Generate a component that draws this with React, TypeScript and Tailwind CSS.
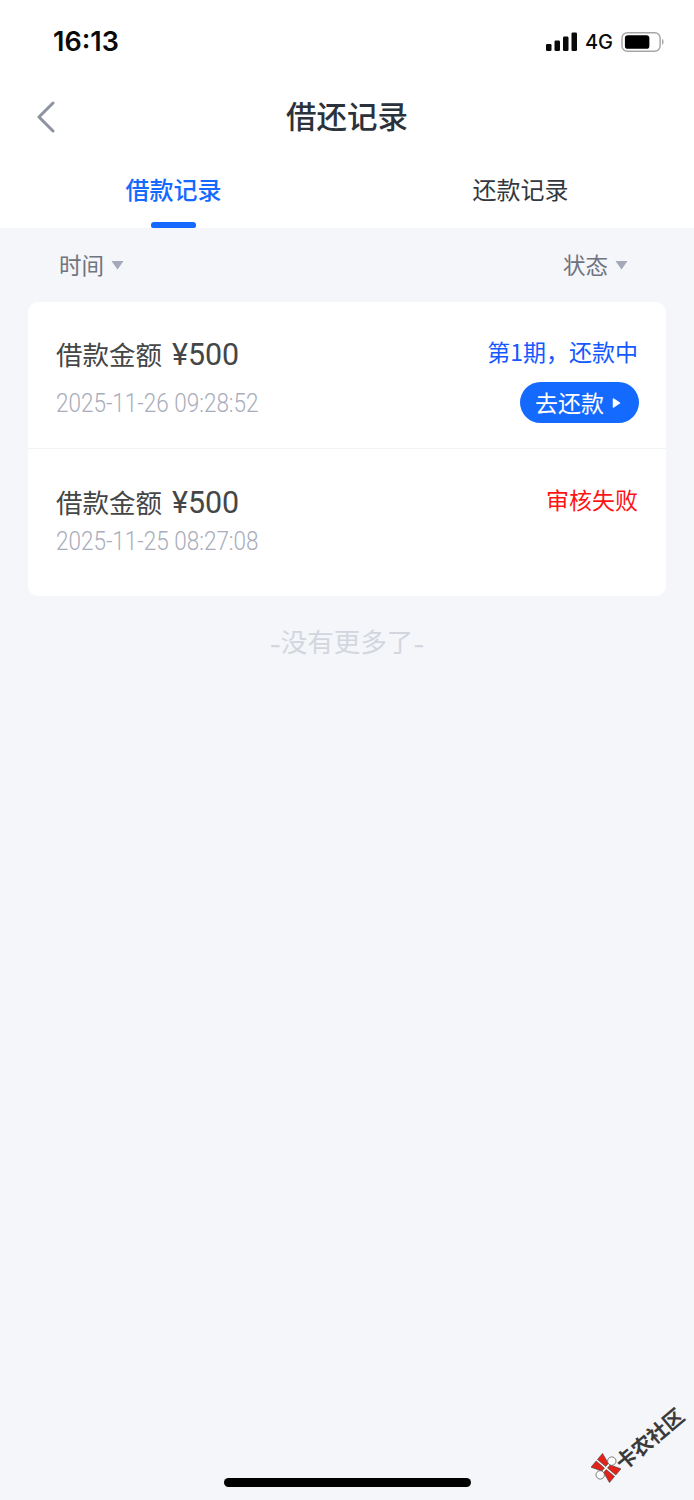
const cjk = { fontFamily: '"Noto Sans CJK SC", "Noto Sans", sans-serif' };
const latin = { fontFamily: 'Roboto, "Noto Sans CJK SC", sans-serif' };

function Caret() {
  return (
    <svg width="13" height="10" viewBox="0 0 13 10" className="ml-[7px]">
      <path d="M0.5 1 H12.5 L6.5 9.5 Z" fill="#a3a8ba" />
    </svg>
  );
}

function Row({ date, status, statusClass, children, rowClass, dateClass }: any) {
  return (
    <div className={rowClass}>
      <div className="flex flex-col">
        <div className="-mt-[1px] flex items-baseline text-[26.5px] leading-[36px] text-[#444648]">
          借款金额
          <span style={latin} className="ml-[10px] inline-block origin-left scale-x-[0.98] text-[31px] font-normal">¥500</span>
        </div>
        <div style={latin} className={`origin-left scale-x-[0.9] whitespace-nowrap text-[25px] font-light leading-[30px] text-[#a9adbb] ${dateClass}`}>{date}</div>
      </div>
      <div className="flex flex-col items-end">
        <div className={`-mt-[2px] text-[23px] leading-[32px] ${statusClass}`}>{status}</div>
        {children}
      </div>
    </div>
  );
}

export default function App() {
  return (
    <div style={cjk} className="relative h-[1500px] w-[694px] overflow-hidden bg-[#f4f6fa]">
      <div className="h-[228px] bg-white">
        <div className="flex h-[84px] items-center justify-between pl-[53px] pr-[29px]">
          <span style={{ fontFamily: 'Inter, sans-serif' }} className="text-[27px] font-semibold text-[#0a0a0a]">16:13</span>
          <div className="flex items-center">
            <svg width="32" height="20" viewBox="0 0 32 20">
              <rect x="0" y="12" width="5.5" height="7" rx="1.2" fill="#0a0a0a" />
              <rect x="8.5" y="8.5" width="5.5" height="10.5" rx="1.2" fill="#0a0a0a" />
              <rect x="17" y="4.5" width="5.5" height="14.5" rx="1.2" fill="#0a0a0a" />
              <rect x="25.5" y="0.5" width="5.5" height="18.5" rx="1.2" fill="#0a0a0a" />
            </svg>
            <span style={{ fontFamily: 'Inter, sans-serif' }} className="ml-[7px] text-[20px] font-medium text-[#0a0a0a]">4G</span>
            <svg width="44" height="22" viewBox="0 0 45 22" className="ml-[8px]">
              <rect x="1" y="1.5" width="39" height="19" rx="5.5" fill="none" stroke="#a6a6a6" strokeWidth="1.5" />
              <rect x="4" y="4" width="25" height="14" rx="3" fill="#000" />
              <path d="M42 8 C44 8.5 44 13.5 42 14 Z" fill="#a6a6a6" />
            </svg>
          </div>
        </div>
        <div className="relative flex h-[66px] items-center justify-center pb-[4px]">
          <svg width="20" height="32" viewBox="0 0 20 32" className="absolute left-[36px] top-[17px]">
            <path d="M17 2 L3 16 L17 30" fill="none" stroke="#8d93a1" strokeWidth="3" strokeLinecap="round" strokeLinejoin="round" />
          </svg>
          <span className="text-[30.5px] font-medium leading-none text-[#2b323b]">借还记录</span>
        </div>
        <div className="flex h-[78px]">
          <div className="relative flex h-full w-1/2 items-center justify-center">
            <span className="text-[24px] font-medium text-[#1469ff]">借款记录</span>
            <div className="absolute bottom-0 left-[151px] h-[6px] w-[45px] rounded-t-[3px] rounded-b-[2px] bg-[#1469ff]" />
          </div>
          <div className="flex h-full w-1/2 items-center justify-center">
            <span className="text-[24px] text-[#33383f]">还款记录</span>
          </div>
        </div>
      </div>

      <div className="flex h-[74px] items-center justify-between pl-[59px] pr-[66px]">
        <div className="flex items-center text-[22.5px] text-[#6f7480]">时间<Caret /></div>
        <div className="flex items-center text-[22.5px] text-[#6f7480]">状态<Caret /></div>
      </div>

      <div className="mx-[28px] overflow-hidden rounded-[10px] bg-white">
        <Row
          rowClass="flex h-[147px] justify-between border-b border-[#f2f3f6] pl-[28px] pr-[28px] pt-[35px]"
          date="2025-11-26 09:28:52"
          dateClass="mt-[16px]"
          status="第1期，还款中"
          statusClass="text-[#1459ff]"
        >
          <div className="-mr-[1px] mt-[15px] flex h-[41px] w-[119px] items-center rounded-full bg-[#1469ff] pl-[15px] text-[23px] text-white">
            去还款
            <svg width="10" height="12" viewBox="0 0 10 12" className="ml-[8px]">
              <path d="M1.5 2 L7.5 6 L1.5 10 Z" fill="#fff" stroke="#fff" strokeWidth="1.5" strokeLinejoin="round" />
            </svg>
          </div>
        </Row>
        <Row
          rowClass="flex h-[147px] justify-between pl-[28px] pr-[28px] pt-[36px]"
          date="2025-11-25 08:27:08"
          dateClass="mt-[6px]"
          status="审核失败"
          statusClass="text-[#ff1414]"
        />
      </div>

      <div className="mt-[27px] flex items-center justify-center text-[26.5px] leading-[36px] text-[#d3d6de]">
        <span className="w-[11px] text-center text-[32px] leading-[36px]">-</span>
        没有更多了
        <span className="w-[11px] text-center text-[32px] leading-[36px]">-</span>
      </div>

      <div className="absolute bottom-[13px] left-[224px] h-[9px] w-[247px] rounded-full bg-black" />

      <svg width="30" height="30" viewBox="0 0 30 30" className="absolute left-[591px] top-[1453px]">
        <g transform="rotate(40 15 15)">
          <path d="M3 6 L13.8 10 V14 H3 Z M3 24 L13.8 20 V16 H3 Z M27 6 L16.2 10 V14 H27 Z M27 24 L16.2 20 V16 H27 Z" fill="#e2231a" stroke="#333" strokeWidth="0.5" />
          <circle cx="15" cy="6" r="4.2" fill="#fff" stroke="#555" strokeWidth="0.7" />
          <circle cx="15" cy="24" r="4.2" fill="#fff" stroke="#555" strokeWidth="0.7" />
        </g>
      </svg>
      <div
        style={{ fontFamily: '"Noto Sans CJK SC", sans-serif', transform: 'rotate(-40deg)' }}
        className="absolute left-[608px] top-[1428px] whitespace-nowrap text-[20.5px] font-bold leading-none text-[#3a3a3a]"
      >
        卡农社区
      </div>
    </div>
  );
}
